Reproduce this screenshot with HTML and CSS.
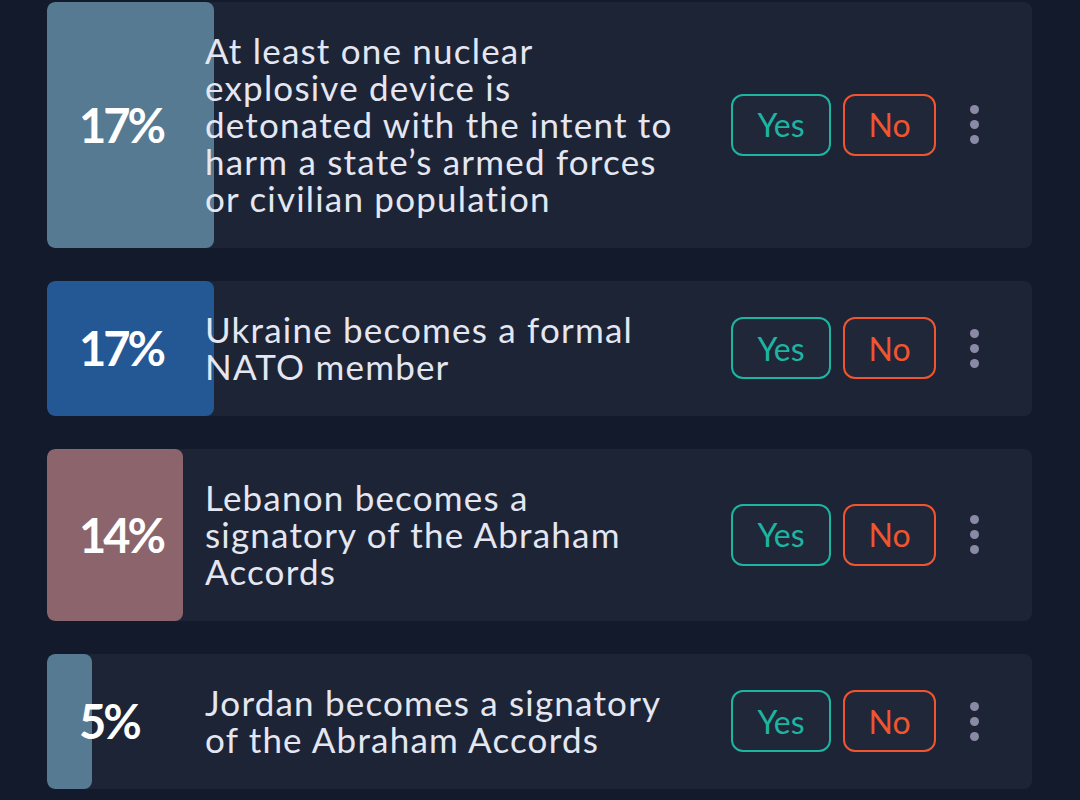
FILE: index.html
```html
<!DOCTYPE html>
<html lang="en">
<head>
    <meta charset="UTF-8">
    <meta name="viewport" content="width=device-width, initial-scale=1.0">
    <title>Forecasts</title>
    <link rel="stylesheet" href="styles.css">
</head>
<body>
    <div class="list">
        <div class="market">
            <div class="bar bar-slate" style="width: 17%"></div>
            <div class="pct">17%</div>
            <div class="question">At least one nuclear<br>explosive device is<br>detonated with the intent to<br>harm a state’s armed forces<br>or civilian population</div>
            <div class="actions">
                <button class="btn btn-yes">Yes</button>
                <button class="btn btn-no">No</button>
                <button class="more" aria-label="More"><span></span><span></span><span></span></button>
            </div>
        </div>

        <div class="market">
            <div class="bar bar-blue" style="width: 17%"></div>
            <div class="pct">17%</div>
            <div class="question">Ukraine becomes a formal<br>NATO member</div>
            <div class="actions">
                <button class="btn btn-yes">Yes</button>
                <button class="btn btn-no">No</button>
                <button class="more" aria-label="More"><span></span><span></span><span></span></button>
            </div>
        </div>

        <div class="market">
            <div class="bar bar-rose" style="width: 13.8%"></div>
            <div class="pct">14%</div>
            <div class="question">Lebanon becomes a<br>signatory of the Abraham<br>Accords</div>
            <div class="actions">
                <button class="btn btn-yes">Yes</button>
                <button class="btn btn-no">No</button>
                <button class="more" aria-label="More"><span></span><span></span><span></span></button>
            </div>
        </div>

        <div class="market">
            <div class="bar bar-slate" style="width: 4.6%"></div>
            <div class="pct">5%</div>
            <div class="question">Jordan becomes a signatory<br>of the Abraham Accords</div>
            <div class="actions">
                <button class="btn btn-yes">Yes</button>
                <button class="btn btn-no">No</button>
                <button class="more" aria-label="More"><span></span><span></span><span></span></button>
            </div>
        </div>
    </div>
</body>
</html>
```

FILE: styles.css
```css
:root {
    --page-bg: #131a2b;
    --card-bg: #1c2435;
    --btn-bg: #1f2739;
    --text: #e4e6f2;
    --teal: #1db5a1;
    --orange: #f0552f;
    --dots: #8a8aa6;
}

body {
    margin: 0;
    background-color: var(--page-bg);
    font-family: Lato, "Noto Sans", sans-serif;
    color: var(--text);
}

.list {
    display: flex;
    flex-direction: column;
    gap: 33px;
    padding: 2px 48px 0 47px;
}

.market {
    position: relative;
    display: flex;
    align-items: center;
    padding: 30px 0 31px;
    background-color: var(--card-bg);
    border-radius: 8px;
    overflow: hidden;
}

.bar {
    position: absolute;
    top: 0;
    bottom: 0;
    left: 0;
    border-radius: 8px;
}

.bar-slate { background-color: #567a91; }
.bar-blue { background-color: #245894; }
.bar-rose { background-color: #8c646c; }

.pct {
    position: relative;
    width: 126px;
    padding-left: 32px;
    flex-shrink: 0;
    font-size: 47px;
    font-weight: 700;
    letter-spacing: -3px;
    color: #fff;
}

.question {
    position: relative;
    flex: 1;
    font-size: 35px;
    line-height: 37px;
    letter-spacing: 1.2px;
}

.actions {
    display: flex;
    align-items: center;
    gap: 12px;
    padding-right: 53px;
}

.btn {
    height: 62px;
    padding: 0;
    background-color: var(--btn-bg);
    border: 2px solid;
    border-radius: 12px;
    font-family: inherit;
    font-size: 32px;
    cursor: pointer;
}

.btn-yes {
    width: 100px;
    color: var(--teal);
    border-color: var(--teal);
}

.btn-no {
    width: 93px;
    color: var(--orange);
    border-color: var(--orange);
}

.more {
    display: flex;
    flex-direction: column;
    align-items: center;
    gap: 6px;
    margin-left: 22px;
    padding: 0;
    background: none;
    border: none;
    cursor: pointer;
}

.more span {
    width: 9px;
    height: 9px;
    border-radius: 50%;
    background-color: var(--dots);
}
```
